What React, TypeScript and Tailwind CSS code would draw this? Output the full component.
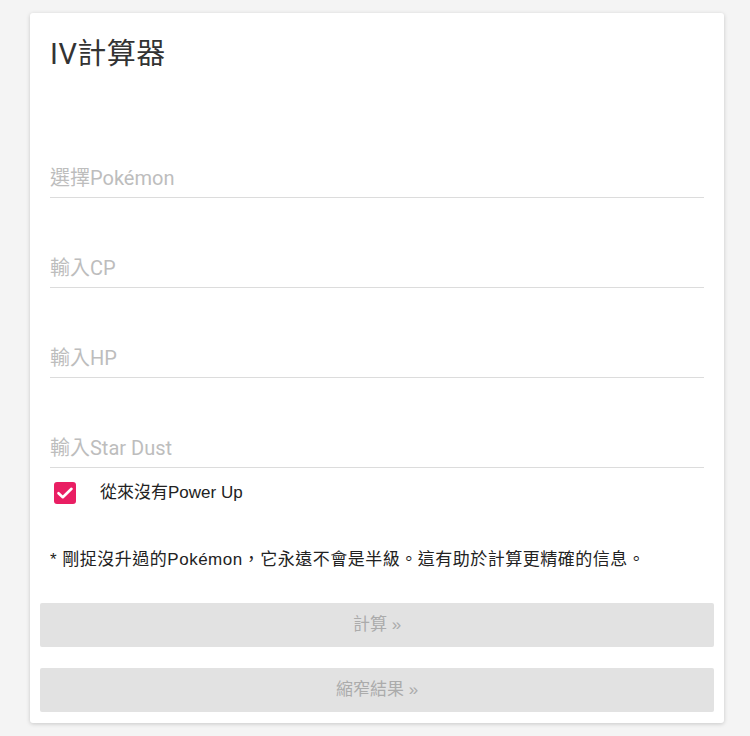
import React from "react";

const roboto = { fontFamily: "Roboto, 'Noto Sans CJK TC', sans-serif" };
const helv = { fontFamily: "'Liberation Sans', 'Noto Sans CJK TC', sans-serif" };

function Field({ placeholder, first }: { placeholder: string; first?: boolean }) {
  return (
    <div className={`${first ? "mt-[88px]" : "mt-[50px]"} h-[40px] border-b border-[#dcdcdc] flex items-center`}>
      <input
        placeholder={placeholder}
        className="w-full h-full bg-transparent outline-none text-[20px] text-[#333] placeholder:text-[#bdbdbd]"
        style={roboto}
      />
    </div>
  );
}

export default function App() {
  return (
    <div className="min-h-[736px] bg-[#f4f4f4] pt-[13px] px-[30px] pb-[13px]">
      <div className="w-[694px] bg-white rounded-[3px] shadow-[0_1px_4px_rgba(0,0,0,0.18)] px-[10px] pt-[25px] pb-[11px]">
        <div className="px-[10px]">
          <h1 className="text-[29px] tracking-[0.5px] leading-[32px] text-[#333]" style={roboto}>
            IV計算器
          </h1>
          <Field placeholder="選擇Pokémon" first />
          <Field placeholder="輸入CP" />
          <Field placeholder="輸入HP" />
          <Field placeholder="輸入Star Dust" />
          <div className="mt-[13px] flex items-center h-[24px]">
            <div className="ml-[4px] w-[22px] h-[22px] rounded-[3px] bg-[#e91e63] flex items-center justify-center">
              <svg width="18" height="18" viewBox="0 0 18 18" fill="none">
                <path d="M2.5 9.2 L6.8 13.2 L15.5 4.8" stroke="white" strokeWidth="2.6" strokeLinecap="round" strokeLinejoin="round" />
              </svg>
            </div>
            <span className="ml-[24px] text-[17px] text-[#222]" style={helv}>
              從來沒有Power Up
            </span>
          </div>
          <p className="mt-[43px] text-[17px] tracking-[0.5px] leading-[24px] text-[#222]" style={helv}>
            * 剛捉沒升過的Pokémon，它永遠不會是半級。這有助於計算更精確的信息。
          </p>
        </div>
        <button
          className="mt-[31px] w-full h-[44px] rounded-[2px] bg-[#e2e2e2] text-[17px] text-[#ababab] flex items-center justify-center"
          style={helv}
        >
          計算 »
        </button>
        <button
          className="mt-[21px] w-full h-[44px] rounded-[2px] bg-[#e2e2e2] text-[17px] text-[#ababab] flex items-center justify-center"
          style={helv}
        >
          縮窄結果 »
        </button>
      </div>
    </div>
  );
}
